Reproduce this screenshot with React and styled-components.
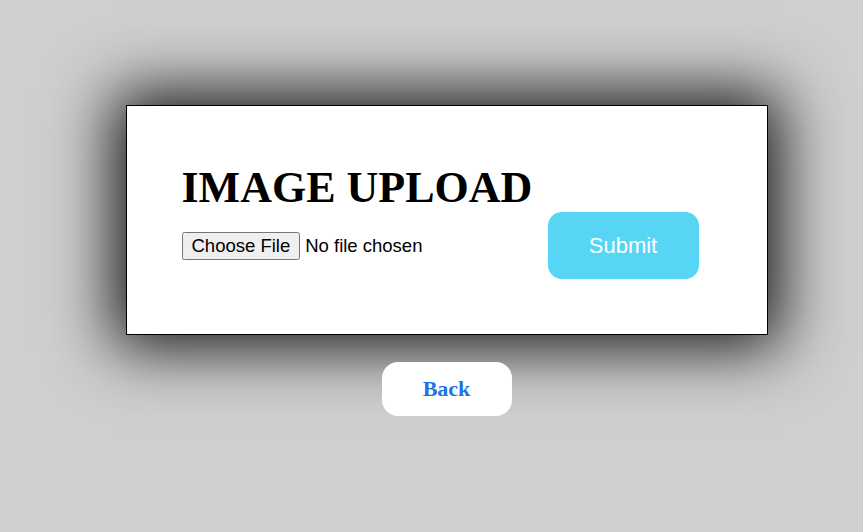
import React from 'react'
import styled, { createGlobalStyle } from 'styled-components'

const GlobalStyle = createGlobalStyle`
  html, body {
    margin: 0;
    background: #cfcfcf;
    height: 100%;
  }
  body {
    font-family: "Liberation Serif", "Times New Roman", serif;
  }
`

const Page = styled.div`
  display: flex;
  flex-direction: column;
  align-items: center;
  padding: 105px 0 0 30px;
`

const Card = styled.div`
  box-sizing: border-box;
  width: 642px;
  height: 230px;
  background: #fff;
  border: 1px solid #000;
  box-shadow: 0 0 60px 12px rgba(0, 0, 0, 0.9);
  padding: 0 68px 0 55px;
  display: flex;
  align-items: flex-end;
  justify-content: space-between;
`

const Form = styled.div`
  display: flex;
  flex-direction: column;
  align-items: flex-start;
`

const Title = styled.h1`
  margin: 0 0 22px;
  font-family: "Liberation Serif", "Times New Roman", serif;
  font-size: 44px;
  font-weight: bold;
  line-height: 1;
  white-space: nowrap;
  color: #000;
`

const FileInput = styled.input`
  font-family: "Liberation Sans", Arial, sans-serif;
  font-size: 18.5px;
  color: #000;
  margin-bottom: 74px;

  &::file-selector-button {
    font: inherit;
    padding: 1px 8px;
    margin-right: 5px;
  }
`

const SubmitButton = styled.button`
  flex-shrink: 0;
  width: 151px;
  height: 67px;
  margin-bottom: 55px;
  border: none;
  border-radius: 14px;
  background: #57d5f5;
  color: #fff;
  font-family: "Liberation Sans", Arial, sans-serif;
  font-size: 22px;
  cursor: pointer;
`

const BackButton = styled.button`
  margin-top: 27px;
  width: 130px;
  height: 54px;
  border: none;
  border-radius: 16px;
  background: #fff;
  color: #1a73e8;
  font-family: "Liberation Serif", "Times New Roman", serif;
  font-weight: bold;
  font-size: 22px;
  cursor: pointer;
`

export default function App() {
  return (
    <>
      <GlobalStyle />
      <Page>
        <Card>
          <Form>
            <Title>IMAGE UPLOAD</Title>
            <FileInput type="file" />
          </Form>
          <SubmitButton>Submit</SubmitButton>
        </Card>
        <BackButton>Back</BackButton>
      </Page>
    </>
  )
}
